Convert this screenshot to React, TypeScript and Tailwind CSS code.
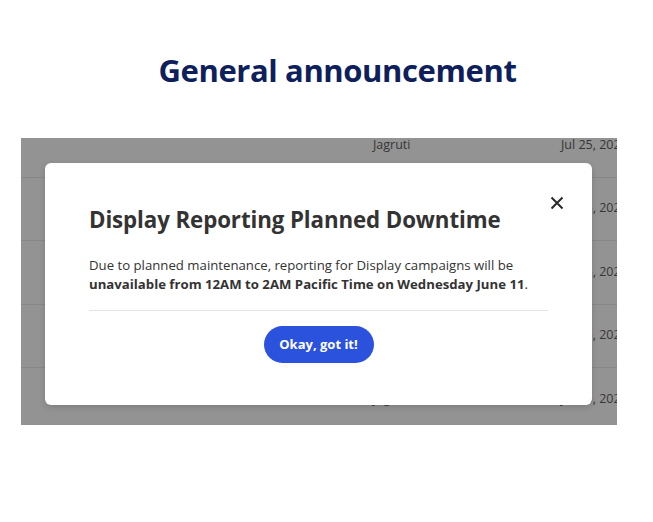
export default function App() {
  const rows = [
    { name: "Jagruti", date: "Jul 25, 2024" },
    { name: "", date: "Jul 25, 2024" },
    { name: "", date: "Jul 25, 2024" },
    { name: "", date: "Jul 25, 2024" },
    { name: "Jagruti", date: "Jul 25, 2024" },
  ];
  return (
    <div
      className="w-[653px] h-[522px] bg-white overflow-hidden"
      style={{ fontFamily: '"Open Sans", "Liberation Sans", sans-serif' }}
    >
      <h1 className="pt-[50px] pl-[22px] text-center text-[31px] leading-[40px] font-bold tracking-[-0.4px] text-[#0f1f5c]">
        General announcement
      </h1>

      <div className="relative ml-[21px] mt-[48px] w-[596px] h-[287px] overflow-hidden bg-[#939393]">
        {/* table rows behind the dimmed overlay */}
        <div className="-mt-[24px]">
          {rows.map((r, i) => (
            <div
              key={i}
              className="flex items-center h-[63.5px] border-b border-[#878787] text-[12.5px] text-[#363636]"
            >
              <div className="ml-[352px] w-[188px] shrink-0">{r.name}</div>
              <div className="shrink-0 whitespace-nowrap">{r.date}</div>
            </div>
          ))}
        </div>

        {/* dialog */}
        <div className="absolute left-[24px] top-[25px] w-[547px] h-[242px] rounded-[6px] bg-white shadow-[0_2px_6px_rgba(0,0,0,0.15)] px-[44px] pt-[42px]">
          <button className="absolute right-[28px] top-[33px] w-[14px] h-[14px] text-[#2a2a2a]">
            <svg viewBox="0 0 14 14" width="14" height="14" fill="none" stroke="currentColor" strokeWidth="2">
              <path d="M1.5 1.5L12.5 12.5M12.5 1.5L1.5 12.5" />
            </svg>
          </button>
          <h2 className="text-[22.3px] leading-[30px] font-bold tracking-[-0.1px] text-[#333333]">
            Display Reporting Planned Downtime
          </h2>
          <p className="mt-[21px] text-[13.2px] leading-[19px] text-[#333333]">
            Due to planned maintenance, reporting for Display campaigns will be{" "}
            <span className="font-bold">
              unavailable from 12AM to 2AM Pacific Time on Wednesday June 11
            </span>
            .
          </p>
          <div className="mt-[16px] h-px bg-[#e4e4e4]" />
          <div className="mt-[15px] flex justify-center">
            <button className="h-[37px] w-[110px] rounded-full bg-[#2b52dc] text-[13px] font-bold text-white">
              Okay, got it!
            </button>
          </div>
        </div>
      </div>
    </div>
  );
}
